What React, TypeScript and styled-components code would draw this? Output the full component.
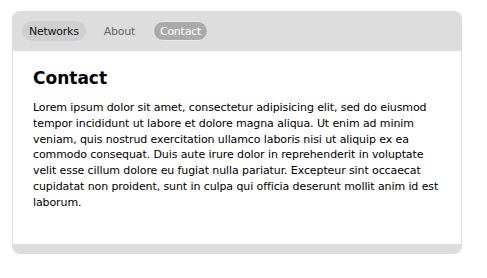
import React from 'react';
import styled, { createGlobalStyle } from 'styled-components';

const GlobalStyle = createGlobalStyle`
  html, body {
    margin: 0;
    padding: 0;
    background: #ffffff;
  }
  body {
    font-family: "DejaVu Sans", Verdana, sans-serif;
  }
`;

const Frame = styled.div`
  width: 450px;
  margin: 11px 0 0 12px;
  background: #dddddd;
  border-radius: 8px;
  padding: 0 1px 10px;
  box-sizing: border-box;
`;

const TabBar = styled.ul`
  display: flex;
  align-items: center;
  gap: 11px;
  height: 40px;
  margin: 0;
  padding: 0 9px;
  list-style: none;
`;

const Tab = styled.li<{ $state?: 'hover' | 'active' }>`
  display: flex;
  align-items: center;
  height: 20px;
  padding: 0 6px;
  box-sizing: border-box;
  border-radius: 10px;
  font-size: 11px;
  letter-spacing: -0.25px;
  color: ${p => (p.$state === 'active' ? '#ffffff' : p.$state === 'hover' ? '#111111' : '#666666')};
  background: ${p => (p.$state === 'active' ? '#aaaaaa' : p.$state === 'hover' ? '#cfcfcf' : 'transparent')};
  border: 1px solid ${p => (p.$state === 'active' ? '#e8e8e8' : 'transparent')};
`;

const Panel = styled.div`
  background: #ffffff;
  padding: 15px 20px 33px;
  color: #000000;
`;

const Heading = styled.h2`
  margin: 0 0 10px;
  font-size: 17px;
  font-weight: bold;
  line-height: 24px;
`;

const Text = styled.p`
  margin: 0;
  font-size: 11px;
  line-height: 15.8px;
  letter-spacing: -0.1px;
`;

export default function App() {
  return (
    <>
      <GlobalStyle />
      <Frame>
        <TabBar>
          <Tab $state="hover">Networks</Tab>
          <Tab>About</Tab>
          <Tab $state="active">Contact</Tab>
        </TabBar>
        <Panel>
          <Heading>Contact</Heading>
          <Text>
            Lorem ipsum dolor sit amet, consectetur adipisicing elit, sed do eiusmod tempor incididunt ut labore et
            dolore magna aliqua. Ut enim ad minim veniam, quis nostrud exercitation ullamco laboris nisi ut aliquip ex
            ea commodo consequat. Duis aute irure dolor in reprehenderit in voluptate velit esse cillum dolore eu
            fugiat nulla pariatur. Excepteur sint occaecat cupidatat non proident, sunt in culpa qui officia deserunt
            mollit anim id est laborum.
          </Text>
        </Panel>
      </Frame>
    </>
  );
}
